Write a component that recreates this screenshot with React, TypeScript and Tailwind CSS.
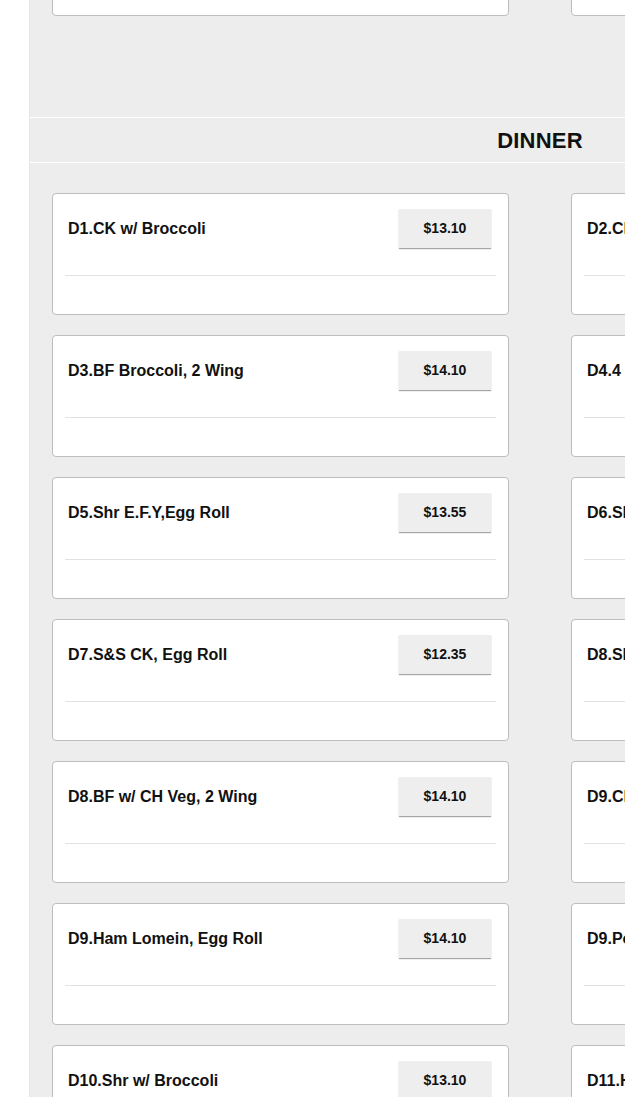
import React from 'react';

type Item = { name: string; price: string };

const prev: Item[] = [
  { name: 'L31.Shr Lomein', price: '$10.25' },
  { name: 'L32.BF Lomein', price: '$10.25' },
];

const dinner: Item[] = [
  { name: 'D1.CK w/ Broccoli', price: '$13.10' },
  { name: 'D2.Chicken Lomein, Egg Roll', price: '$13.10' },
  { name: 'D3.BF Broccoli, 2 Wing', price: '$14.10' },
  { name: 'D4.4 Wings, F. Rice', price: '$13.10' },
  { name: 'D5.Shr E.F.Y,Egg Roll', price: '$13.55' },
  { name: 'D6.Shr Lomein, Egg Roll', price: '$13.55' },
  { name: 'D7.S&S CK, Egg Roll', price: '$12.35' },
  { name: 'D8.Shr w/ Mix Veg', price: '$13.55' },
  { name: 'D8.BF w/ CH Veg, 2 Wing', price: '$14.10' },
  { name: 'D9.Chicken Wing, F. Rice', price: '$13.10' },
  { name: 'D9.Ham Lomein, Egg Roll', price: '$14.10' },
  { name: 'D9.Pork Lomein, Egg Roll', price: '$13.10' },
  { name: 'D10.Shr w/ Broccoli', price: '$13.10' },
  { name: 'D11.Hot & Spicy CK', price: '$13.10' },
];

const MenuCard: React.FC<{ item: Item }> = ({ item }) => (
  <div className="h-[122px] bg-white border border-[#bdbdbd] rounded-[4px] flex flex-col">
    <div className="flex items-center justify-between pl-[15px] pr-[17px] mt-[15px] h-[39px]">
      <span className="text-[16px] font-bold text-[#111]">{item.name}</span>
      <span className="w-[92px] h-[39px] flex items-center justify-center bg-[#eeeeee] text-[14px] font-bold text-[#111] shadow-[0_1px_1px_rgba(0,0,0,0.35)]">
        {item.price}
      </span>
    </div>
    <div className="mx-[12px] mt-[27px] border-t border-[#e2e2e2]" />
  </div>
);

export default function App() {
  return (
    <div className="w-[625px] h-[1097px] overflow-hidden bg-white flex" style={{ fontFamily: '"Liberation Sans", Arial, sans-serif' }}>
      <div className="w-[29px] shrink-0 bg-white" />
      <div className="w-[1021px] shrink-0 bg-[#ededed] border-l border-[#e6e6e6]">
        <div className="-mt-[106px] px-[22px] pb-[101px] grid grid-cols-2 gap-x-[62px] gap-y-[20px]">
          {prev.map((it, i) => (
            <MenuCard key={i} item={it} />
          ))}
        </div>
        <div className="h-[46px] border-y border-white flex items-center justify-center">
          <h2 className="text-[22px] font-bold text-[#111] tracking-[0.2px]">DINNER</h2>
        </div>
        <div className="pt-[30px] px-[22px] grid grid-cols-2 gap-x-[62px] gap-y-[20px]">
          {dinner.map((it, i) => (
            <MenuCard key={i} item={it} />
          ))}
        </div>
      </div>
    </div>
  );
}
